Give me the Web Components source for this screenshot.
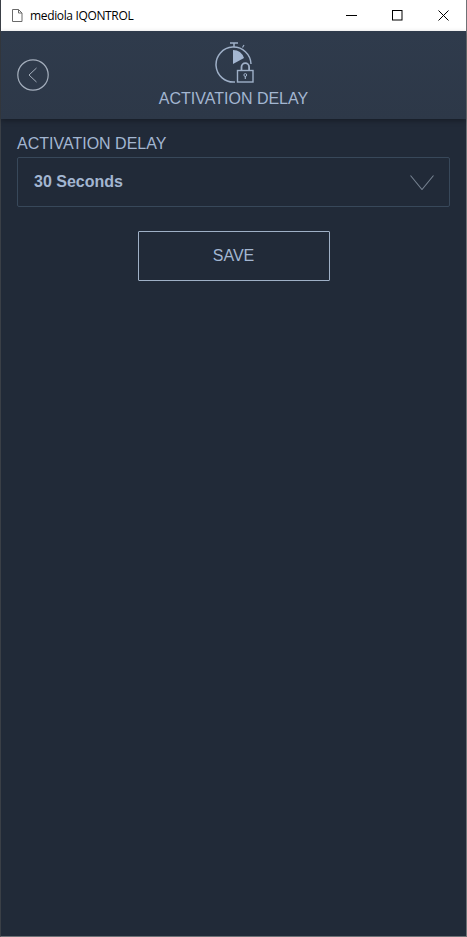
<!DOCTYPE html>
<html>
<head>
<meta charset="utf-8">
<title>mediola IQONTROL</title>
<style>
    html, body { margin: 0; height: 100%; background: #212a38; }
    body { font-family: "Liberation Sans", Arial, sans-serif; overflow: hidden; }
</style>
</head>
<body>
<app-window>
    <title-bar>mediola IQONTROL</title-bar>
    <page-header>ACTIVATION DELAY</page-header>
    <page-content>
        <select-field label="ACTIVATION DELAY">30 Seconds</select-field>
        <save-button>SAVE</save-button>
    </page-content>
</app-window>

<script>
class AppWindow extends HTMLElement {
    connectedCallback() {
        this.attachShadow({ mode: 'open' });
        this.shadowRoot.innerHTML = `
            <style>
                :host {
                    display: flex;
                    flex-direction: column;
                    box-sizing: border-box;
                    width: 467px;
                    height: 937px;
                    background: #212a38;
                    border-left: 1px solid #3a3f46;
                    border-right: 1px solid #6f7276;
                    border-bottom: 1px solid #6f7276;
                }
            </style>
            <slot></slot>
`;
    }
}

class TitleBar extends HTMLElement {
    connectedCallback() {
        this.attachShadow({ mode: 'open' });
        this.shadowRoot.innerHTML = `
            <style>
                :host {
                    display: flex;
                    align-items: center;
                    flex: none;
                    height: 31px;
                    background: #fff;
                    color: #000;
                    font: 12px "Open Sans", "Noto Sans", sans-serif;
                }
                .doc { margin: 0 6px 0 10px; display: block; }
                .name { flex: 1; letter-spacing: -0.35px; }
                .btn {
                    width: 46px;
                    height: 31px;
                    display: flex;
                    align-items: center;
                    justify-content: center;
                }
                .btn svg { display: block; }
            </style>
            <svg class="doc" width="13" height="15" viewBox="0 0 13 15" fill="none" stroke="#6a6a6a">
                <path d="M1.5 1.5h6l3.500 3.500v8.500h-9.500z"/>
                <path d="M7.5 1.5v3.500h3.500"/>
            </svg>
            <span class="name"><slot></slot></span>
            <span class="btn"><svg width="11" height="11" viewBox="0 0 11 11" stroke="#000"><path d="M0 5.5h11"/></svg></span>
            <span class="btn"><svg width="11" height="11" viewBox="0 0 11 11" fill="none" stroke="#000"><rect x="0.5" y="0.5" width="9.5" height="9.5"/></svg></span>
            <span class="btn"><svg width="11" height="11" viewBox="0 0 11 11" stroke="#000"><path d="M0.5 0.5l10 10M10.5 0.5l-10 10"/></svg></span>
`;
    }
}

class PageHeader extends HTMLElement {
    connectedCallback() {
        this.attachShadow({ mode: 'open' });
        this.shadowRoot.innerHTML = `
            <style>
                :host {
                    display: grid;
                    grid-template-columns: 1fr auto 1fr;
                    align-items: center;
                    flex: none;
                    box-sizing: border-box;
                    height: 88px;
                    padding: 0 16px;
                    background: linear-gradient(#2f3b4c, #2d3848);
                    box-shadow: 0 2px 5px rgba(0, 0, 0, 0.3);
                    position: relative;
                    color: #a3b6d1;
                    font-size: 16px;
                }
                .back { display: block; }
                .center {
                    display: flex;
                    flex-direction: column;
                    align-items: center;
                    align-self: start;
                    padding-top: 10px;
                }
                .icon { display: block; margin-bottom: 7px; }
                .title { line-height: 18px; }
            </style>
            <svg class="back" width="32" height="32" viewBox="0 0 32 32" fill="none" stroke="#a5afbd" stroke-width="1.2">
                <circle cx="16" cy="16" r="15.2"/>
                <path d="M19.5 9l-7.500 7 7.500 7" stroke-width="1"/>
            </svg>
            <div class="center">
                <svg class="icon" width="43" height="42" viewBox="0 0 43 42" fill="none" stroke="#9fb0c8">
                    <path d="M18 2h8M22 2v4" stroke-width="1.500"/>
                    <path d="M32 4l-1.500 2.500" stroke-width="1.200"/>
                    <path d="M23 41a17.500 17.500 0 1 1 16-18" stroke-width="1.500"/>
                    <path d="M21 9a12 12 0 0 1 11 8L21 23z" fill="#a3b6d1" stroke="none"/>
                    <rect x="25.500" y="29.500" width="15.500" height="11.500" stroke-width="1.400"/>
                    <path d="M29.500 29.500v-3.500a3.800 3.800 0 0 1 7.600 0v3.500" stroke-width="1.800"/>
                    <circle cx="33.300" cy="34" r="1.400" stroke-width="1"/>
                    <path d="M33.300 35v3" stroke-width="1.200"/>
                </svg>
                <span class="title"><slot></slot></span>
            </div>
            <span></span>
`;
    }
}

class PageContent extends HTMLElement {
    connectedCallback() {
        this.attachShadow({ mode: 'open' });
        this.shadowRoot.innerHTML = `
            <style>
                :host {
                    display: flex;
                    flex-direction: column;
                    flex: 1;
                    gap: 24px;
                    padding: 15px 16px 0;
                }
            </style>
            <slot></slot>
`;
    }
}

class SelectField extends HTMLElement {
    connectedCallback() {
        this.attachShadow({ mode: 'open' });
        this.shadowRoot.innerHTML = `
            <style>
                :host { display: block; color: #a3b6d1; }
                .label { font-size: 16px; line-height: 20px; margin-bottom: 3px; }
                .box {
                    display: flex;
                    align-items: center;
                    justify-content: space-between;
                    box-sizing: border-box;
                    height: 50px;
                    padding: 0 15px 0 16px;
                    border: 1px solid #38485a;
                    border-radius: 2px;
                }
                .value { font-size: 16px; font-weight: bold; }
                svg { display: block; }
            </style>
            <div class="label">${this.getAttribute('label')}</div>
            <div class="box">
                <span class="value"><slot></slot></span>
                <svg width="24" height="15" viewBox="0 0 24 15" fill="none" stroke="#75808f" stroke-width="1.100"><path d="M0.500 0.500l11.500 14 11.500-14"/></svg>
            </div>
`;
    }
}

class SaveButton extends HTMLElement {
    connectedCallback() {
        this.attachShadow({ mode: 'open' });
        this.shadowRoot.innerHTML = `
            <style>
                :host {
                    display: flex;
                    align-items: center;
                    justify-content: center;
                    box-sizing: border-box;
                    align-self: center;
                    width: 192px;
                    height: 50px;
                    border: 1px solid #9fb0c6;
                    border-radius: 1px;
                    color: #a3b6d1;
                    font-size: 16px;
                }
            </style>
            <slot></slot>
`;
    }
}

customElements.define('app-window', AppWindow);
customElements.define('title-bar', TitleBar);
customElements.define('page-header', PageHeader);
customElements.define('page-content', PageContent);
customElements.define('select-field', SelectField);
customElements.define('save-button', SaveButton);
</script>
</body>
</html>
